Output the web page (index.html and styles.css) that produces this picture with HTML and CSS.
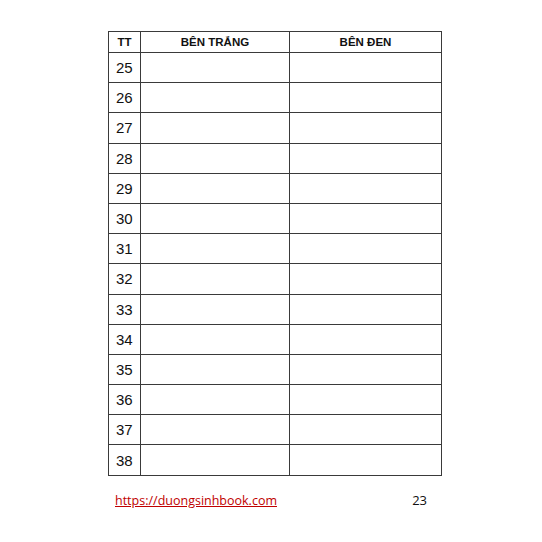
FILE: index.html
```html
<!DOCTYPE html>
<html>
<head>
<meta charset="utf-8">
<link rel="stylesheet" href="styles.css">
</head>
<body>
<div class="page">
  <table class="sheet">
    <colgroup>
      <col class="c-tt"><col class="c-w"><col class="c-b">
    </colgroup>
    <thead>
      <tr class="head"><th>TT</th><th>BÊN TRẮNG</th><th>BÊN ĐEN</th></tr>
    </thead>
    <tbody>
      <tr><td class="num">25</td><td></td><td></td></tr>
      <tr><td class="num">26</td><td></td><td></td></tr>
      <tr><td class="num">27</td><td></td><td></td></tr>
      <tr><td class="num">28</td><td></td><td></td></tr>
      <tr><td class="num">29</td><td></td><td></td></tr>
      <tr><td class="num">30</td><td></td><td></td></tr>
      <tr><td class="num">31</td><td></td><td></td></tr>
      <tr><td class="num">32</td><td></td><td></td></tr>
      <tr><td class="num">33</td><td></td><td></td></tr>
      <tr><td class="num">34</td><td></td><td></td></tr>
      <tr><td class="num">35</td><td></td><td></td></tr>
      <tr><td class="num">36</td><td></td><td></td></tr>
      <tr><td class="num">37</td><td></td><td></td></tr>
      <tr><td class="num">38</td><td></td><td></td></tr>
    </tbody>
  </table>
  <div class="footer">
    <a class="link" href="#">https://duongsinhbook.com</a>
    <span class="pageno">23</span>
  </div>
</div>
</body>
</html>
```

FILE: styles.css
```css
html, body {
  margin: 0;
  padding: 0;
  background: #ffffff;
}
.page {
  width: 542px;
  height: 542px;
  padding: 31px 0 0 108px;
  box-sizing: border-box;
  font-family: "Liberation Sans", Arial, sans-serif;
  color: #111;
}
.sheet {
  border-collapse: collapse;
  table-layout: fixed;
  width: 333px;
}
.c-tt { width: 32px; }
.c-w { width: 149px; }
.c-b { width: 152px; }
.sheet th, .sheet td {
  border: 1px solid #3a3a3a;
  padding: 0;
}
.head {
  height: 21px;
}
.sheet th {
  font-size: 11.5px;
  font-weight: bold;
  text-align: center;
  vertical-align: middle;
}
.sheet tbody tr {
  height: 30.2px;
}
.num {
  font-size: 15px;
  padding-left: 7px !important;
  text-align: left;
  vertical-align: middle;
}
.footer {
  display: flex;
  justify-content: space-between;
  align-items: baseline;
  width: 312px;
  margin: 15px 0 0 7px;
  font-family: "Open Sans", "Liberation Sans", sans-serif;
  font-size: 12.5px;
}
.link {
  color: #c00000;
  text-decoration: underline;
}
.pageno {
  color: #111;
  font-size: 13px;
}
```
